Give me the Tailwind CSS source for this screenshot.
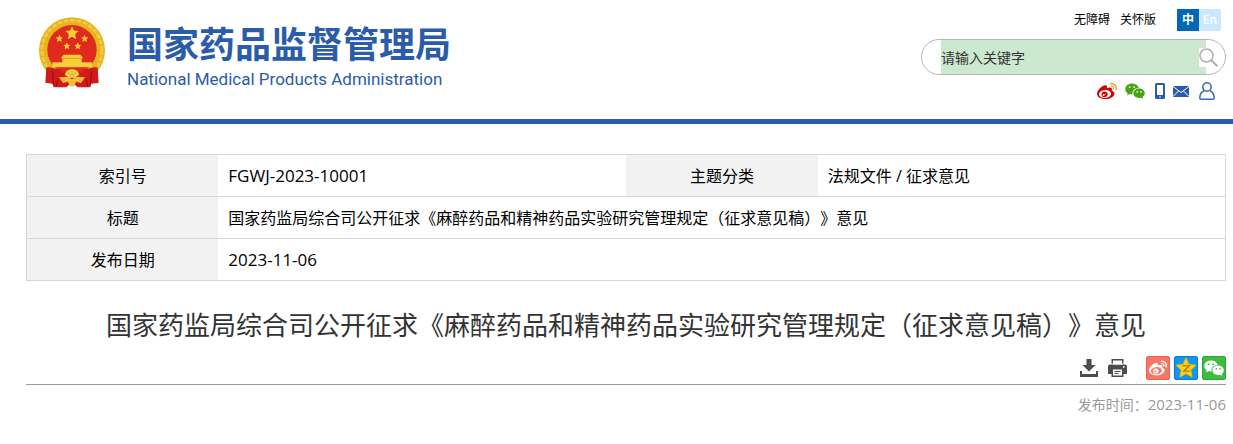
<!DOCTYPE html>
<html lang="zh-CN">
<head>
  <meta charset="UTF-8" />
  <meta name="viewport" content="width=device-width, initial-scale=1.0"/>
  <title>国家药品监督管理局</title>
  <script src="https://cdn.jsdelivr.net/npm/@tailwindcss/browser@4"></script>
</head>
<body class="bg-white text-black font-['Open_Sans','Noto_Sans_CJK_SC',sans-serif] [text-spacing-trim:space-all]">

  <!-- Icon shapes used more than once -->
  <svg class="hidden">
    <symbol id="weibo" viewBox="0 0 24 24">
      <path d="M10.098 20.323c-3.977.391-7.414-1.406-7.672-4.02-.259-2.609 2.759-5.047 6.74-5.441 3.979-.394 7.413 1.404 7.671 4.018.259 2.6-2.759 5.049-6.737 5.439zM9.05 17.219c-.384.616-1.208.884-1.829.602-.612-.279-.793-.991-.406-1.593.379-.595 1.176-.861 1.793-.601.622.263.82.972.442 1.592zm1.27-1.627c-.141.237-.449.353-.689.253-.236-.09-.313-.361-.177-.586.138-.227.436-.346.672-.24.239.09.315.36.18.601zm.176-2.719c-1.893-.493-4.033.45-4.857 2.118-.836 1.704-.026 3.591 1.886 4.21 1.983.64 4.318-.341 5.132-2.179.8-1.793-.201-3.642-2.161-4.149zm7.563-1.224c-.346-.105-.57-.18-.405-.615.375-.977.42-1.804 0-2.404-.781-1.112-2.915-1.053-5.364-.03 0 0-.766.331-.571-.271.376-1.217.315-2.224-.27-2.809-1.338-1.337-4.869.045-7.888 3.08C1.309 10.87 0 13.273 0 15.348c0 3.981 5.099 6.395 10.086 6.395 6.536 0 10.888-3.801 10.888-6.82 0-1.822-1.547-2.854-2.915-3.284z" fill="currentColor"/>
      <path d="M19.967 6.557c-.766-.856-1.908-1.187-2.96-.962-.436.09-.706.511-.616.932.09.42.511.691.932.602.511-.105 1.067.044 1.442.465.376.421.466.977.316 1.473-.136.406.089.856.51.992.405.119.857-.105.992-.512.33-1.021.12-2.178-.646-3.035zm2.418-2.15c-1.576-1.757-3.905-2.419-6.054-1.968-.496.104-.812.587-.706 1.081.104.496.586.813 1.082.707 1.532-.331 3.185.15 4.296 1.383 1.112 1.246 1.429 2.943.947 4.416-.165.48.106 1.007.586 1.157.479.165.991-.104 1.157-.586.675-2.088.241-4.478-1.338-6.235z" class="fill-(--wave)"/>
    </symbol>
    <symbol id="wechat" viewBox="0 0 20 17">
      <path d="M7 .5C3.200.5.300 2.900.300 6c0 1.800.9 3.300 2.400 4.300L2 12.500l2.700-1.400c.7.2 1.500.3 2.300.3h.5C7 7.500 10 4.800 13.700 4.900 13 2.300 10.300.5 7 .5z" fill="currentColor"/>
      <path d="M19.800 10.300c0-2.600-2.600-4.700-5.700-4.700s-5.700 2.100-5.700 4.700 2.500 4.700 5.700 4.700c.7 0 1.300-.1 1.900-.3l2.200 1.300-.6-2c1.400-.9 2.200-2.200 2.200-3.700z" fill="currentColor"/>
      <g class="fill-(--eye)">
        <circle cx="4.700" cy="4.200" r=".9"/><circle cx="9.200" cy="4.200" r=".9"/>
        <circle cx="12.200" cy="8.900" r=".8"/><circle cx="16" cy="8.900" r=".8"/>
      </g>
    </symbol>
    <symbol id="star" viewBox="0 0 100 100">
      <path d="M50 0l15 34 35 4-27 24 9 38-32-20-32 20 9-38L0 38l35-4z"/>
    </symbol>
  </svg>

  <!-- Header -->
  <header class="flex justify-between items-start border-b-5 border-[#2a5caa] pl-[39px] pr-[7px] pt-[9px] pb-[18px]">
    <a href="#" class="flex items-start gap-[22px] pt-2 text-[#2a5caa]">
      <svg class="w-[66px] h-[71px]" viewBox="0 0 198 213" aria-hidden="true">
        <circle cx="99" cy="100" r="99" fill="#e6b322"/>
        <circle cx="99" cy="100" r="90" fill="none" stroke="#f3cd3c" stroke-width="8" stroke-dasharray="14 5"/>
        <circle cx="99" cy="98" r="74" fill="#e02a1c"/>
        <g fill="#f7cf3a">
          <use href="#star" x="79" y="27" width="40" height="40"/>
          <use href="#star" x="50" y="53" width="22" height="22"/>
          <use href="#star" x="126" y="53" width="22" height="22"/>
          <use href="#star" x="73" y="76" width="21" height="21"/>
          <use href="#star" x="106" y="76" width="21" height="21"/>
          <path d="M66 122l8-9h50l8 9-4 3v11h31v15H40v-15h30v-11z"/>
        </g>
        <path d="M72 124h54" stroke="#d08a1c" stroke-width="2"/>
        <path d="M22 152c12-4 22 3 36 5l16 9h50l16-9c14-2 24-9 36-5l3 46-22 2-3 11h-38l-12-11H94l-12 11H44l-4-11-21-3z" fill="#d01b1b"/>
        <path d="M40 162l4 40M158 162l-4 40M56 186l-4 22M142 186l4 22" stroke="#a01010" stroke-width="4"/>
        <path d="M78 174c0-10 9-17 21-17s21 7 21 17l-13 8H91z" fill="#f7d548"/>
        <path d="M60 181l28-2 11 8 11-8 28 2-12 17-15-4-5 14H92l-5-14-15 4z" fill="#edc038"/>
        <path d="M99 162v16M89 165l6 12M109 165l-6 12" stroke="#cf9320" stroke-width="2"/>
      </svg>
      <span class="flex flex-col">
        <span class="text-[36px] leading-[56px] font-bold">国家药品监督管理局</span>
        <span class="font-[Roboto] text-[17px] leading-3">National Medical Products Administration</span>
      </span>
    </a>

    <div class="flex flex-col items-end">
      <div class="flex items-center text-xs pr-[5px]">
        <a href="#" class="mr-2.5">无障碍</a>
        <a href="#" class="mr-[21px]">关怀版</a>
        <a href="#" class="w-[22px] h-[22px] leading-[22px] text-center font-bold bg-[#0068b7] text-white">中</a>
        <a href="#" class="w-[22px] h-[22px] leading-[22px] text-center font-semibold bg-[#cce8ff] text-white">En</a>
      </div>

      <form class="relative mt-2 w-[305px] h-9 rounded-full border border-[#b5b5b5] px-[19px]">
        <input type="text" aria-label="请输入关键字" placeholder="请输入关键字"
          class="block w-full h-full bg-[#cce8cf] text-sm text-[#333] placeholder:text-[#333] outline-none" />
        <button type="button" aria-label="搜索" class="absolute right-[7px] top-2 bg-white">
          <svg class="block w-[19px] h-[19px]" viewBox="0 0 19 19" fill="none" stroke="#b0b0b0" stroke-width="1.500">
            <circle cx="7.500" cy="7.500" r="6.500"/><path d="M12.300 12.300l6 6" stroke-width="2"/>
          </svg>
        </button>
      </form>

      <div class="flex items-center mt-1.5 pr-[11px] gap-2.5">
        <a href="#" aria-label="微博" class="-mr-0.5 text-[#d40000] [--wave:#f5a623]"><svg class="block w-5 h-5"><use href="#weibo"/></svg></a>
        <a href="#" aria-label="微信" class="text-[#45a614] [--eye:#fff]"><svg class="block w-5 h-[17px]"><use href="#wechat"/></svg></a>
        <a href="#" aria-label="手机版">
          <svg class="block w-[10px] h-4" viewBox="0 0 10 16"><rect width="10" height="16" rx="1.500" fill="#2a5caa"/><path d="M2 2h6v10H2z" fill="#fff"/><circle cx="5" cy="14" r=".8" fill="#fff"/></svg>
        </a>
        <a href="#" aria-label="邮箱" class="-ml-0.5">
          <svg class="block w-4 h-[11px]" viewBox="0 0 16 11"><path d="M0 0h16v11H0z" fill="#2a5caa"/><path d="M0 .5l8 6 8-6M0 10.500l5.500-5.500M16 10.500L10.500 5" fill="none" stroke="#fff"/></svg>
        </a>
        <a href="#" aria-label="登录">
          <svg class="block w-4 h-[18px]" viewBox="0 0 16 18" fill="none" stroke="#3f68b5" stroke-width="1.500"><circle cx="8" cy="5" r="4.200"/><path d="M5 8.800C2.200 10 .8 12.500.8 16c0 .8.400 1.200 1.200 1.200h12c.8 0 1.200-.4 1.200-1.200 0-3.500-1.400-6-4.200-7.200"/></svg>
        </a>
      </div>
    </div>
  </header>

  <!-- Document -->
  <main class="pl-[26px] pr-[7px] pt-[30px]">
    <table class="w-full table-fixed border-collapse border border-[#d7d7d7] text-base">
      <colgroup>
        <col class="w-[16%]" /><col class="w-[34%]" /><col class="w-[16%]" /><col class="w-[34%]" />
      </colgroup>
      <tbody>
        <tr class="h-[42px] border-b border-[#d7d7d7]">
          <th class="bg-[#f2f2f2] font-normal">索引号</th>
          <td class="px-2.5 text-[17px]">FGWJ-2023-10001</td>
          <th class="bg-[#f2f2f2] font-normal">主题分类</th>
          <td class="px-2.5">法规文件 / 征求意见</td>
        </tr>
        <tr class="h-[42px] border-b border-[#d7d7d7]">
          <th class="bg-[#f2f2f2] font-normal">标题</th>
          <td colspan="3" class="px-2.5">国家药监局综合司公开征求《麻醉药品和精神药品实验研究管理规定（征求意见稿）》意见</td>
        </tr>
        <tr class="h-[42px]">
          <th class="bg-[#f2f2f2] font-normal">发布日期</th>
          <td colspan="3" class="px-2.5 text-[17px]">2023-11-06</td>
        </tr>
      </tbody>
    </table>

    <h1 class="mt-6 text-center text-[26px] leading-10 text-[#333]">国家药监局综合司公开征求《麻醉药品和精神药品实验研究管理规定（征求意见稿）》意见</h1>

    <div class="flex justify-end items-center gap-1 mt-[11px] pb-1 border-b border-[#999]">
      <button type="button" aria-label="下载" class="mr-1.5">
        <svg class="block w-[18px] h-[18px]" viewBox="0 0 18 18" fill="#4d4d4d"><path d="M6.500 0h5v6h4L9 12.500 2.500 6h4z"/><path d="M0 12h2v3h14v-3h2v6H0z"/></svg>
      </button>
      <button type="button" aria-label="打印" class="mr-[15px]">
        <svg class="block w-[19px] h-[18px]" viewBox="0 0 19 18" fill="#4d4d4d"><path d="M3.500 0h12v4.500h-12z"/><path d="M2 5.500h15a2 2 0 0 1 2 2V15H0V7.500a2 2 0 0 1 2-2z"/><path d="M5 1.500h9V5.500H5z" fill="#fff"/><path d="M3.500 9.500h12V18h-12z"/><path d="M5 10.500h9v6H5z" fill="#fff"/><path d="M6.500 12h6v1h-6zM6.500 14h4v1h-4z"/><circle cx="15.800" cy="7.900" r=".9" fill="#fff"/></svg>
      </button>
      <a href="#" aria-label="分享到微博" class="w-6 h-6 p-0.5 rounded-xs bg-[#f67766] border border-[#ee6554] text-white [--wave:#fff]"><svg class="block w-full h-full"><use href="#weibo"/></svg></a>
      <a href="#" aria-label="分享到QQ空间" class="w-6 h-6 rounded-xs bg-[#1296f0] border border-[#087bd0]">
        <svg class="block w-full h-full" viewBox="0 0 22 22"><path d="M11 1l2.900 6.400 7 .8-5.200 4.800 1.400 7L11 16.600 4.900 20l1.400-7L1.100 8.200l7-.8z" fill="#ffd21c" stroke="#f5b800" stroke-linejoin="round"/><path d="M7.500 8.800h6.800l-5.600 5.400h6" fill="none" stroke="#b77900" stroke-width="1.300"/></svg>
      </a>
      <a href="#" aria-label="分享到微信" class="flex items-center justify-center w-6 h-6 rounded-xs bg-[#3cbd42] border border-[#2da934] text-white [--eye:#3cbd42]"><svg class="block w-5 h-[17px]"><use href="#wechat"/></svg></a>
    </div>

    <p class="mt-2 pb-5 text-right text-sm leading-[22px] text-[#999]">发布时间：<span class="text-[15px]">2023-11-06</span></p>
  </main>

</body>
</html>
